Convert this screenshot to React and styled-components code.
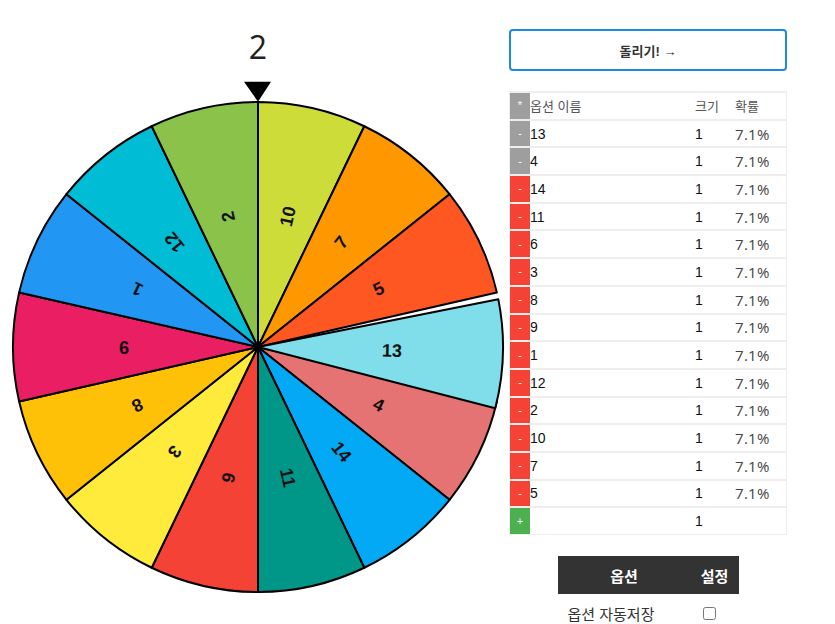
import React from 'react';
import styled, { createGlobalStyle } from 'styled-components';

const GlobalStyle = createGlobalStyle`
  body {
    margin: 0;
    background: #fff;
    font-family: "Open Sans", "Noto Sans CJK KR", sans-serif;
  }
`;

const Page = styled.div`
  display: flex;
  align-items: flex-start;
  gap: 1px;
  width: 835px;
  height: 624px;
  padding-left: 8px;
  box-sizing: border-box;
  overflow: hidden;
`;

const WheelColumn = styled.div`
  width: 500px;
  display: flex;
  flex-direction: column;
  align-items: center;
`;

const Result = styled.div`
  margin-top: 25px;
  height: 44px;
  line-height: 44px;
  font-size: 32px;
  color: #222;
  font-family: "Open Sans", sans-serif;
`;

const SidePanel = styled.div`
  width: 278px;
  padding-top: 29px;
  display: flex;
  flex-direction: column;
  align-items: center;
`;

const SpinButton = styled.button`
  width: 100%;
  height: 42px;
  border: 2px solid #1e88e5;
  border-radius: 4px;
  background: #fff;
  color: #333;
  font-family: "Liberation Sans", "Noto Sans CJK KR", sans-serif;
  font-size: 13px;
  font-weight: bold;
  cursor: pointer;
`;

const OptionTable = styled.div`
  width: 100%;
  margin-top: 20px;
  box-sizing: border-box;
  border: 1px solid #eee;
  padding-top: 1px;
  display: flex;
  flex-direction: column;
  gap: 2px;
  background: #eee;
`;

const Row = styled.div`
  display: grid;
  grid-template-columns: 20px 1fr 40px 54px;
  align-items: center;
  height: 25.7px;
  background: #fff;
  font-family: "Liberation Sans", "Noto Sans CJK KR", sans-serif;
  font-size: 14px;
  color: ${(p) => (p.$head ? '#555' : '#111')};
`;

const RowButton = styled.div`
  height: 100%;
  display: flex;
  align-items: center;
  justify-content: center;
  background: ${(p) => p.$color};
  color: #fff;
  font-size: 11px;
  line-height: 1;
`;

const Name = styled.div`
  font-size: ${(p) => (p.$head ? '13px' : '14px')};
  white-space: nowrap;
`;

const Size = styled.div`
  padding-left: 3px;
  font-size: ${(p) => (p.$head ? '13px' : '14px')};
`;

const Prob = styled.div`
  padding-left: 3px;
  letter-spacing: ${(p) => (p.$head ? '0' : '0.3px')};
  font-family: ${(p) => (p.$head ? '"Liberation Sans", "Noto Sans CJK KR", sans-serif' : '"Open Sans", sans-serif')};
  font-size: ${(p) => (p.$head ? '13px' : '15px')};
  color: ${(p) => (p.$head ? '#555' : '#444')};
`;

const Settings = styled.div`
  margin-top: 21px;
  width: 181px;
  display: grid;
  grid-template-columns: 133px 48px;
  font-family: "Liberation Sans", "Noto Sans CJK KR", sans-serif;
`;

const SettingsHead = styled.div`
  height: 38px;
  display: flex;
  align-items: center;
  justify-content: center;
  background: #333;
  color: #fff;
  font-size: 15px;
  font-weight: bold;
`;

const SettingsCell = styled.div`
  height: 38px;
  display: flex;
  align-items: center;
  justify-content: ${(p) => (p.$left ? 'flex-start' : 'center')};
  padding-left: ${(p) => (p.$left ? '10px' : '0')};
  font-size: 15px;
  color: #333;
`;

const Check = styled.input`
  margin: 0 10px 0 0;
  width: 13px;
  height: 13px;
`;

const slices = [
  { label: '10', color: '#CDDC39' },
  { label: '7', color: '#FF9800' },
  { label: '5', color: '#FF5722' },
  { label: '13', color: '#80DEEA', shift: 1.6 },
  { label: '4', color: '#E57373' },
  { label: '14', color: '#03A9F4' },
  { label: '11', color: '#009688' },
  { label: '6', color: '#F44336' },
  { label: '3', color: '#FFEB3B' },
  { label: '8', color: '#FFC107' },
  { label: '9', color: '#E91E63' },
  { label: '1', color: '#2196F3' },
  { label: '12', color: '#00BCD4' },
  { label: '2', color: '#8BC34A' },
];

const CX = 250;
const CY = 278;
const R = 245;

function point(deg, r) {
  const a = (deg * Math.PI) / 180;
  return [CX + r * Math.cos(a), CY + r * Math.sin(a)];
}

function Wheel() {
  const step = 360 / slices.length;
  const items = slices.map((s, i) => {
    const start = -90 + i * step + (s.shift || 0);
    const end = start + step;
    const mid = start + step / 2;
    const [x1, y1] = point(start, R);
    const [x2, y2] = point(end, R);
    const [tx, ty] = point(mid, 134);
    return { ...s, i, mid, tx, ty, d: `M${CX},${CY} L${x1},${y1} A${R},${R} 0 0 1 ${x2},${y2} Z` };
  });
  // the shifted slice sits on top of its neighbour
  const ordered = [...items.filter((s) => !s.shift), ...items.filter((s) => s.shift)];

  return (
    <svg width="500" height="555" viewBox="0 0 500 555">
      {ordered.map((s) => (
        <g key={s.label}>
          <path d={s.d} fill={s.color} stroke="#000" strokeWidth="2" strokeLinejoin="round" />
          <text
            x={s.tx}
            y={s.ty}
            transform={`rotate(${s.mid} ${s.tx} ${s.ty})`}
            textAnchor="middle"
            dominantBaseline="central"
            fontFamily="Liberation Sans, sans-serif"
            fontWeight="bold"
            fontSize="18"
            fill="#111"
          >
            {s.label}
          </text>
        </g>
      ))}
      <polygon points="236,12.7 263,12.7 250,32.7" fill="#000" />
    </svg>
  );
}

const tableRows = ['13', '4', '14', '11', '6', '3', '8', '9', '1', '12', '2', '10', '7', '5'];

export default function App() {
  return (
    <>
      <GlobalStyle />
      <Page>
        <WheelColumn>
          <Result>2</Result>
          <Wheel />
        </WheelColumn>
        <SidePanel>
          <SpinButton>돌리기! →</SpinButton>
          <OptionTable>
            <Row $head>
              <RowButton $color="#9e9e9e">*</RowButton>
              <Name $head>옵션 이름</Name>
              <Size $head>크기</Size>
              <Prob $head>확률</Prob>
            </Row>
            {tableRows.map((name, i) => (
              <Row key={name}>
                <RowButton $color={i < 2 ? '#9e9e9e' : '#f44336'}>-</RowButton>
                <Name>{name}</Name>
                <Size>1</Size>
                <Prob>7.1%</Prob>
              </Row>
            ))}
            <Row>
              <RowButton $color="#4caf50">+</RowButton>
              <Name />
              <Size>1</Size>
              <Prob />
            </Row>
          </OptionTable>
          <Settings>
            <SettingsHead>옵션</SettingsHead>
            <SettingsHead>설정</SettingsHead>
            <SettingsCell $left>옵션 자동저장</SettingsCell>
            <SettingsCell>
              <Check type="checkbox" />
            </SettingsCell>
          </Settings>
        </SidePanel>
      </Page>
    </>
  );
}
